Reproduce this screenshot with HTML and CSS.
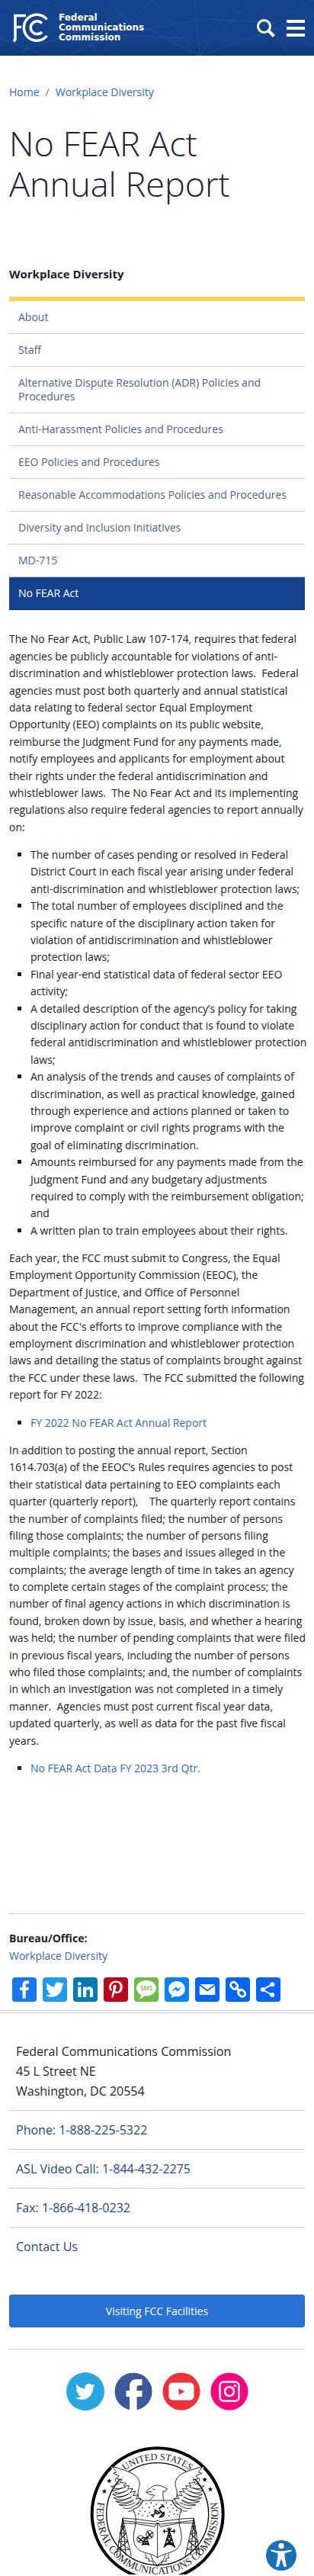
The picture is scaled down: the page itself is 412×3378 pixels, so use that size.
FILE: index.html
```html
<!DOCTYPE html>
<html lang="en">
<head>
<meta charset="utf-8">
<meta name="viewport" content="width=device-width, initial-scale=1">
<title>No FEAR Act Annual Report | Federal Communications Commission</title>
<link rel="stylesheet" href="styles.css">
</head>
<body>
<header class="site-header">
  <svg class="header-art" viewBox="0 0 412 73" preserveAspectRatio="xMidYMid slice" aria-hidden="true">
    <path d="M0 22L70 -5L30 73M70 0L130 73L200 0L262 73L300 10L412 60M262 73L160 20L20 70M262 73L255 0M262 73L330 0L380 73M262 73L412 20M140 0L180 40L270 25L360 30L412 0M90 73L150 45L240 50M0 50L60 73" fill="none" stroke="#7fa4dc" stroke-opacity=".16"/>
  </svg>
  <a class="brand" href="#">
    <svg class="brand-mark" viewBox="0 0 46 40" aria-hidden="true">
      <g fill="none" stroke="#fff">
        <path d="M1 3.500H17M3 2V34.500L1.200 37.500M3 18.500H11" stroke-width="3.500"/>
        <path d="M44.500 8.500A17 17 0 1 0 44.500 30" stroke-width="3.500"/>
        <path d="M38 13.500A8.500 8.500 0 1 0 38 25" stroke-width="3.500"/>
      </g>
    </svg>
    <span class="brand-name">Federal<br>Communications<br>Commission</span>
  </a>
  <div class="header-tools">
    <button class="tool" type="button" aria-label="Search">
      <svg width="26" height="26" viewBox="0 0 26 26" aria-hidden="true"><circle cx="10.500" cy="10.500" r="8" fill="none" stroke="#fff" stroke-width="3"/><path d="M16 16L23.500 23.500" stroke="#fff" stroke-width="4"/></svg>
    </button>
    <button class="tool" type="button" aria-label="Menu">
      <svg width="24" height="22" viewBox="0 0 24 22" aria-hidden="true"><path d="M0 2H24M0 11H24M0 20H24" stroke="#fff" stroke-width="4"/></svg>
    </button>
  </div>
</header>

<main class="page">
  <nav class="breadcrumb" aria-label="Breadcrumb">
    <a href="#">Home</a><span class="sep">/</span><a href="#">Workplace Diversity</a>
  </nav>
  <h1 class="title">No FEAR Act Annual Report</h1>

  <nav class="side" aria-labelledby="side-title">
    <h2 class="side-title" id="side-title">Workplace Diversity</h2>
    <ul class="side-list">
      <li><a href="#">About</a></li>
      <li><a href="#">Staff</a></li>
      <li><a href="#">Alternative Dispute Resolution (ADR) Policies and Procedures</a></li>
      <li><a href="#">Anti-Harassment Policies and Procedures</a></li>
      <li><a href="#">EEO Policies and Procedures</a></li>
      <li><a href="#">Reasonable Accommodations Policies and Procedures</a></li>
      <li><a href="#">Diversity and Inclusion Initiatives</a></li>
      <li><a href="#">MD-715</a></li>
      <li><a class="current" href="#" aria-current="page">No FEAR Act</a></li>
    </ul>
  </nav>

  <article class="article">
    <p>The No Fear Act, Public Law 107-174, requires that federal agencies be publicly accountable for violations of anti-discrimination and whistleblower protection laws.&nbsp; Federal agencies must post both quarterly and annual statistical data relating to federal sector Equal Employment Opportunity (EEO) complaints on its public website, reimburse the Judgment Fund for any payments made, notify employees and applicants for employment about their rights under the federal antidiscrimination and whistleblower laws.&nbsp; The No Fear Act and its implementing regulations also require federal agencies to report annually on:</p>
    <ul>
      <li>The number of cases pending or resolved in Federal District Court in each fiscal year arising under federal anti-discrimination and whistleblower protection laws;</li>
      <li>The total number of employees disciplined and the specific nature of the disciplinary action taken for violation of antidiscrimination and whistleblower protection laws;</li>
      <li>Final year-end statistical data of federal sector EEO activity;</li>
      <li>A detailed description of the agency’s policy for taking disciplinary action for conduct that is found to violate federal antidiscrimination and whistleblower protection laws;</li>
      <li>An analysis of the trends and causes of complaints of discrimination, as well as practical knowledge, gained through experience and actions planned or taken to improve complaint or civil rights programs with the goal&nbsp;of eliminating discrimination.</li>
      <li>Amounts reimbursed for any payments made from the Judgment Fund and any budgetary adjustments required to comply with the reimbursement obligation; and</li>
      <li>A written plan to train employees about their rights.</li>
    </ul>
    <p>Each year, the FCC must submit to Congress, the Equal Employment Opportunity Commission (EEOC), the Department of Justice, and Office of Personnel Management, an annual report setting forth information about the FCC's efforts to improve compliance with the employment discrimination and whistleblower protection laws and detailing the status of complaints brought against the FCC under these laws.&nbsp; The FCC submitted the following report for FY 2022:</p>
    <ul>
      <li><a href="#">FY 2022 No FEAR Act Annual Report</a></li>
    </ul>
    <p>In addition to posting the annual report, Section 1614.703(a) of the EEOC’s Rules requires agencies to post their statistical data pertaining to EEO complaints each quarter (quarterly report),&nbsp; &nbsp; The quarterly report contains the number of complaints filed; the number of persons filing those complaints; the number of persons filing multiple complaints; the bases and issues alleged in the complaints; the average length of time in takes an agency to&nbsp;complete certain stages of the complaint process; the number of final agency actions in which discrimination is found, broken down by issue, basis, and whether a hearing was held; the number of pending complaints that were filed in previous fiscal years, including the number of persons who filed those complaints; and, the number of complaints in&nbsp;which an investigation was not completed in a timely manner.&nbsp; Agencies must post current fiscal year data, updated quarterly, as well as data for the past five fiscal years.</p>
    <ul>
      <li><a href="#">No FEAR Act Data FY 2023 3rd Qtr.</a></li>
    </ul>
  </article>

  <section class="bureau">
    <strong>Bureau/Office:</strong>
    <a href="#">Workplace Diversity</a>
  </section>

  <div class="share">
    <a class="chip fb" href="#" aria-label="Facebook"><svg viewBox="0 0 32 32"><path d="M17.780 27.500V17.008h3.522l.527-4.090h-4.050v-2.610c0-1.182.33-1.990 2.023-1.990h2.166V4.660c-.375-.05-1.660-.16-3.155-.16-3.123 0-5.260 1.905-5.260 5.405v3.016h-3.530v4.090h3.530V27.500h4.223z"/></svg></a>
    <a class="chip tw" href="#" aria-label="Twitter"><svg viewBox="0 0 32 32"><path id="bird" d="M28 8.557a9.913 9.913 0 0 1-2.828.775 4.930 4.930 0 0 0 2.166-2.725 9.738 9.738 0 0 1-3.130 1.194 4.920 4.920 0 0 0-3.593-1.550 4.924 4.924 0 0 0-4.794 6.049c-4.090-.21-7.720-2.170-10.150-5.150a4.942 4.942 0 0 0-.665 2.477c0 1.710.87 3.214 2.190 4.100a4.968 4.968 0 0 1-2.230-.616v.06c0 2.390 1.700 4.380 3.952 4.830-.414.115-.85.174-1.297.174-.318 0-.626-.03-.928-.086a4.935 4.935 0 0 0 4.600 3.420 9.893 9.893 0 0 1-6.114 2.107c-.398 0-.79-.023-1.175-.068a13.953 13.953 0 0 0 7.550 2.213c9.056 0 14.010-7.507 14.010-14.013 0-.213-.005-.426-.015-.637.96-.695 1.795-1.560 2.455-2.550z"/></svg></a>
    <a class="chip li" href="#" aria-label="LinkedIn"><svg viewBox="0 0 32 32"><path d="M6.227 12.610h4.190v13.480h-4.190V12.610zm2.095-6.700a2.430 2.430 0 0 1 0 4.860c-1.344 0-2.428-1.090-2.428-2.430s1.084-2.430 2.428-2.430m4.720 6.700h4.020v1.840h.058c.56-1.058 1.927-2.176 3.965-2.176 4.238 0 5.020 2.792 5.020 6.420v7.395h-4.183v-6.560c0-1.564-.03-3.574-2.178-3.574-2.180 0-2.514 1.700-2.514 3.460v6.668h-4.187V12.610z"/></svg></a>
    <a class="chip pi" href="#" aria-label="Pinterest"><svg viewBox="0 0 32 32"><path d="M16.539 4.500c-6.277 0-9.442 4.500-9.442 8.253 0 2.272.86 4.293 2.705 5.046.303.125.574.005.662-.33.061-.231.205-.816.27-1.060.088-.331.053-.447-.191-.736-.532-.627-.873-1.439-.873-2.591 0-3.338 2.498-6.327 6.505-6.327 3.548 0 5.497 2.168 5.497 5.062 0 3.810-1.686 7.025-4.188 7.025-1.382 0-2.416-1.142-2.085-2.545.397-1.674 1.166-3.480 1.166-4.689 0-1.081-.581-1.983-1.782-1.983-1.413 0-2.548 1.462-2.548 3.419 0 1.247.421 2.091.421 2.091l-1.699 7.199c-.505 2.137-.076 4.755-.039 5.019.021.158.223.196.314.077.13-.17 1.813-2.247 2.384-4.324.162-.587.929-3.631.929-3.631.46.876 1.801 1.646 3.227 1.646 4.247 0 7.128-3.871 7.128-9.053.003-3.918-3.317-7.568-8.361-7.568z"/></svg></a>
    <a class="chip sms" href="#" aria-label="SMS"><svg viewBox="0 0 32 32"><path d="M16 4C9 4 3 8 3 14c0 4 2.500 7.200 6.400 9.100-.4 2-1.600 3.700-3.200 5 3.300-.2 5.800-1.600 7.300-3.800 8.700.9 15.500-4 15.500-10.300C29 8 23 4 16 4z"/><text x="16" y="17" text-anchor="middle">SMS</text></svg></a>
    <a class="chip ms" href="#" aria-label="Messenger"><svg viewBox="0 0 32 32"><path d="M16 5C9.986 5 5.110 9.560 5.110 15.182c0 3.200 1.580 6.054 4.046 7.920V27l3.716-2.060c.99.276 2.040.425 3.128.425 6.014 0 10.890-4.560 10.890-10.183S22.013 5 16 5zm1.147 13.655L14.330 15.730l-5.423 3 5.946-6.310 2.816 2.925 5.420-3-5.946 6.310z"/></svg></a>
    <a class="chip blue" href="#" aria-label="Email"><svg viewBox="0 0 32 32"><path d="M6.500 9h19.200L16.100 16.200zM5.800 10.800L16.100 18.600 26.200 10.800V23H5.800z"/></svg></a>
    <a class="chip blue" href="#" aria-label="Copy link"><svg viewBox="0 0 32 32"><g fill="none" stroke="#fff" stroke-width="2.800" transform="rotate(45 16 16)"><rect x="4" y="12" width="10" height="7.500" rx="3.700"/><rect x="18" y="12" width="10" height="7.500" rx="3.700"/><path d="M11.500 15.800H20.500"/></g></svg></a>
    <a class="chip blue" href="#" aria-label="Share"><svg viewBox="0 0 32 32"><path d="M21 9.300L8.500 16L21 23" fill="none" stroke="#fff" stroke-width="2"/><circle cx="21.200" cy="9.200" r="3"/><circle cx="8.800" cy="16" r="3"/><circle cx="21.200" cy="23" r="3"/></svg></a>
  </div>
</main>

<footer class="footer">
  <address class="address">Federal Communications Commission<br>45 L Street NE<br>Washington, DC 20554</address>
  <ul class="contacts">
    <li><a href="#">Phone: 1-888-225-5322</a></li>
    <li><a href="#">ASL Video Call: 1-844-432-2275</a></li>
    <li><a href="#">Fax: 1-866-418-0232</a></li>
    <li><a href="#">Contact Us</a></li>
  </ul>
  <a class="visit" href="#">Visiting FCC Facilities</a>
  <div class="social">
    <a href="#" aria-label="Twitter"><svg viewBox="0 0 50 50"><circle cx="25" cy="25" r="25" fill="#29a6df"/><use href="#bird" fill="#fff" transform="translate(7.500 8) scale(1.080)"/></svg></a>
    <a href="#" aria-label="Facebook"><svg viewBox="0 0 50 50"><circle cx="25" cy="25" r="24.500" fill="#3c5a98"/><path d="M20 50V32H15.500V24H20V18.500C20 12 24 9 29.500 9H36.500V17H32C30 17 29.500 18 29.500 19.500V24H36.500V32H29.500V50z" fill="#fff"/></svg></a>
    <a href="#" aria-label="YouTube"><svg viewBox="0 0 50 50"><circle cx="25" cy="25" r="24.500" fill="#ed3237"/><rect x="8.500" y="13.500" width="33" height="23" rx="5" fill="#fff"/><path d="M21.500 21L29.500 25.200L21.500 29.500z" fill="#ed3237"/></svg></a>
    <a href="#" aria-label="Instagram"><svg viewBox="0 0 50 50"><circle cx="25" cy="25" r="24.500" fill="#ff0081"/><rect x="12.500" y="12.500" width="25" height="25" rx="5" fill="none" stroke="#fff" stroke-width="2.500"/><circle cx="25" cy="25" r="6" fill="none" stroke="#fff" stroke-width="2.500"/><circle cx="32.500" cy="17.500" r="1.800" fill="#fff"/></svg></a>
  </div>
  <svg class="seal" viewBox="351 390 531 504" role="img" aria-label="Seal of the Federal Communications Commission">
    <defs>
      <path id="arc-top" d="M405 655A212 212 0 0 1 829 655"/>
      <path id="arc-bottom" d="M394 568A239 239 0 1 0 840 568"/>
      <path id="star" d="M0-10L2.500-3.500H10L4 1.500L6 9L0 4.500L-6 9L-4 1.500L-10-3.500H-2.500z"/>
      <g id="wing">
        <path d="M440 469L485 483L508 492C540 505 552 528 545 550C538 575 535 597 560 603L548 620L520 650"/>
        <path d="M440 469L456 492L443 496L465 506L456 518L478 521L468 533L494 534L484 546L506 545L500 558L520 556L510 571L531 567L520 584L541 581L532 597L552 595L540 612L530 622L552 608"/>
        <path d="M454 514C448 520 452 532 468 540M434 546C442 560 468 560 492 550M436 562C450 578 478 576 500 562M440 578C455 592 485 590 508 574M444 592C462 606 492 602 516 588M452 606C472 618 500 612 524 600M466 620C486 628 510 622 530 610M482 632C498 638 516 632 528 622M500 644C510 648 520 644 530 632M434 546C446 548 456 544 464 536M436 562C450 564 466 560 478 552M440 578C456 580 474 576 490 566M444 592C462 594 480 590 500 578M452 606C470 608 490 602 512 590M466 620C482 620 500 616 520 604"/>
      </g>
      <g id="mast">
        <path d="M480 673L456 822M480 673L514 822M480 673L470 820M480 673L492 820M472 704H487L468 732H494L463 764H501L459 796H508M474 704L494 732L463 764M487 704L468 732L501 764L459 796M463 764L508 796"/>
      </g>
    </defs>
    <circle cx="617" cy="655" r="258" fill="#fff" stroke="#000" stroke-width="12"/>
    <circle cx="617" cy="656" r="201" fill="#fff" stroke="#000" stroke-width="4"/>
    <path d="M433 471L508 490L470 520zM801 471L726 490L764 520z" fill="#fff"/>
    <g class="seal-text">
      <text><textPath href="#arc-top" startOffset="50%" text-anchor="middle">UNITED STATES</textPath></text>
      <text class="seal-name"><textPath href="#arc-bottom" startOffset="50%" text-anchor="middle">FEDERAL COMMUNICATIONS COMMISSION</textPath></text>
    </g>
    <use href="#star" x="427" y="526"/><use href="#star" x="408" y="567"/>
    <use href="#star" x="803" y="521"/><use href="#star" x="825" y="559"/>
    <g fill="none" stroke="#000" stroke-width="2.500">
      <use href="#wing"/>
      <use href="#wing" transform="translate(1234 0) scale(-1 1)"/>
      <path d="M586 602C592 592 602 590 605 582C594 578 586 584 580 574L572 571C574 562 580 560 586 556C596 546 606 542 620 543C634 544 640 552 656 556L648 568L639 566C637 578 639 592 642 602M598 558L608 560M576 570L594 568"/>
      <use href="#mast"/>
      <use href="#mast" transform="translate(1240 0) scale(-1 1)"/>
      <path d="M560 603H675C680 620 692 634 712 638C700 664 699 692 708 720C718 760 706 792 676 804C652 812 630 818 617 828C600 816 580 812 556 804C526 792 516 760 526 720C534 692 534 662 521 638C542 632 554 620 560 603z" fill="#fff"/>
      <path d="M480 672L532 676L606 686L617 682L628 686L704 676L760 672M480 682L606 696L617 692L628 696L760 682M482 692L532 694L606 706L617 690L628 706L704 692L758 692M617 690V828"/>
      <path d="M568 812L574 824L570 830L584 832L582 842L598 842L602 854L617 862L634 852L636 842L652 842L650 832L664 828L658 822L664 812M590 818L600 840L617 858L640 838L648 816"/>
      <circle cx="550" cy="755" r="14"/><ellipse cx="586" cy="737" rx="14" ry="16"/>
      <path d="M538 746L562 766M562 746L542 766M576 724L596 750M598 728L576 748M572 748L556 779M572 748L584 779M564 764H578L560 776H582L564 764M562 750H582" stroke-width="4"/>
      <path d="M663 722L644 787M663 722L684 787M658 740H669L653 758H673L648 776H680M658 740L673 758L648 776M669 740L653 758L680 776M641 787L663 770L687 787M638 724H688M655 712L663 722L672 712M644 716V732M682 716V732M663 708V736" stroke-width="4"/>
      <path d="M596 664L612 648M622 636L640 622M592 658L602 668M634 618L644 630M608 640L626 652L616 656L606 648zM626 668C640 668 646 660 642 650zM624 640L636 652" stroke-width="5"/>
    </g>
    <path d="M570 616H574M590 612H594M610 618H614M650 612H654M668 620H672M582 630H586M600 626H604M556 632H560M546 644H550M566 646H570M584 650H588M540 656H544M556 662H560M576 664H580M655 632H659M676 634H680M690 642H694M664 648H668M680 656H684M660 664H664M694 658H698" stroke="#000" stroke-width="4"/>
  </svg>
</footer>

<button class="access" type="button" aria-label="Accessibility options">
  <svg viewBox="0 0 40 40" aria-hidden="true"><circle cx="20" cy="20" r="20" fill="#1a6fb5"/><circle cx="20" cy="7.500" r="3.700" fill="#fff"/><path d="M6.500 12.500L16 14.200H24L33.500 12.500V14.500L24.500 17V22L27 35H23.500L20.300 25H19.700L16.500 35H13L15.500 22V17L6.500 14.500z" fill="#fff"/></svg>
</button>
</body>
</html>
```
FILE: styles.css
```css
* { box-sizing: border-box; }

body {
  margin: 0;
  background: #fff;
  color: #212121;
  font-family: "Open Sans", "Noto Sans", sans-serif;
  font-size: 14px;
  line-height: 1.6;
}

a { color: #3068bd; text-decoration: none; }
ul { margin: 0; padding: 0; list-style: none; }

/* Header */
.site-header {
  position: relative;
  display: flex;
  align-items: center;
  justify-content: space-between;
  height: 73px;
  padding: 0 12px 0 17px;
  background: linear-gradient(#14428b 70%, #10387a);
}
.header-art { position: absolute; inset: 0; width: 100%; height: 100%; }
.brand { position: relative; display: flex; align-items: center; gap: 14px; color: #fff; }
.brand-mark { width: 46px; height: 40px; }
.brand-name {
  font-family: "DejaVu Sans", sans-serif;
  font-size: 12px;
  font-weight: 700;
  line-height: 13px;
}
.header-tools { position: relative; display: flex; align-items: center; gap: 14px; }
.tool { display: flex; padding: 0; border: 0; background: none; }

/* Page */
.page { padding: 0 12px 11px; border-bottom: 1px solid #ccc; }
.breadcrumb { padding-top: 37px; }
.sep { padding: 0 8px; color: #777; }
.title {
  margin: 29px 0 0;
  color: #222233;
  font-size: 45px;
  font-weight: 300;
  line-height: 53px;
}

/* Section menu */
.side { margin-top: 79px; }
.side-title {
  margin: 0;
  padding-bottom: 17px;
  border-bottom: 6px solid #ffcf5c;
  color: #1d1d30;
  font-size: 15px;
  font-weight: 700;
  line-height: 26px;
}
.side-list a {
  display: block;
  padding: 12px;
  border-bottom: 1px solid #ccc;
  color: #4d6090;
  line-height: 18px;
}
.side-list .current { border-color: #112e70; background: #14428f; color: #fff; }

/* Article */
.article { margin-right: -3px; padding-top: 27px; }
.article p { margin: 0 0 14px; }
.article ul { margin-bottom: 14px; padding-left: 28px; list-style: square; }

.bureau {
  display: flex;
  flex-direction: column;
  margin-top: 179px;
  padding-top: 21px;
  border-top: 1px solid #ccc;
}
.share { display: flex; gap: 8px; margin-top: 17px; padding-left: 4px; }
.chip { display: flex; width: 32px; height: 32px; border-radius: 4px; fill: #fff; }
.chip svg { width: 32px; height: 32px; }
.chip text { font: 600 8px "Open Sans", sans-serif; fill: #6cbe45; }
.fb { background: #1877f2; }
.tw { background: #1d9bf0; }
.li { background: #007bb5; }
.pi { background: #bd081c; }
.sms { background: #6cbe45; }
.ms { background: #0084ff; }
.blue { background: #0166ff; }

/* Footer */
.footer {
  display: flex;
  flex-direction: column;
  margin-top: 2px;
  padding: 0 12px;
  border-top: 1px solid #ccc;
}
.address, .contacts a {
  padding: 12px 9px;
  font-size: 16px;
  font-style: normal;
  line-height: 26px;
}
.address { padding-top: 37px; color: #222233; }
.contacts a { display: block; border-top: 1px solid #ccc; color: #1e4489; }
.visit {
  margin-top: 38px;
  padding: 10px;
  border: 1px solid #2368c8;
  border-radius: 3px;
  background: #2a72d4;
  color: #fff;
  line-height: 21px;
  text-align: center;
}
.social {
  display: flex;
  justify-content: center;
  gap: 13px;
  margin-top: 28px;
  padding-top: 30px;
  border-top: 1px solid #ccc;
}
.social a, .social svg { display: block; width: 50px; height: 50px; }
.seal { width: 177px; height: 168px; margin: 47px auto 0; }
.seal-text { font: 400 37px "Liberation Serif", serif; fill: #222; }
.seal-name { font-size: 41px; }

.access {
  position: fixed;
  right: 23px;
  bottom: 7px;
  width: 40px;
  height: 40px;
  padding: 0;
  border: 0;
  border-radius: 50%;
  background: none;
}
.access svg { display: block; }
```
